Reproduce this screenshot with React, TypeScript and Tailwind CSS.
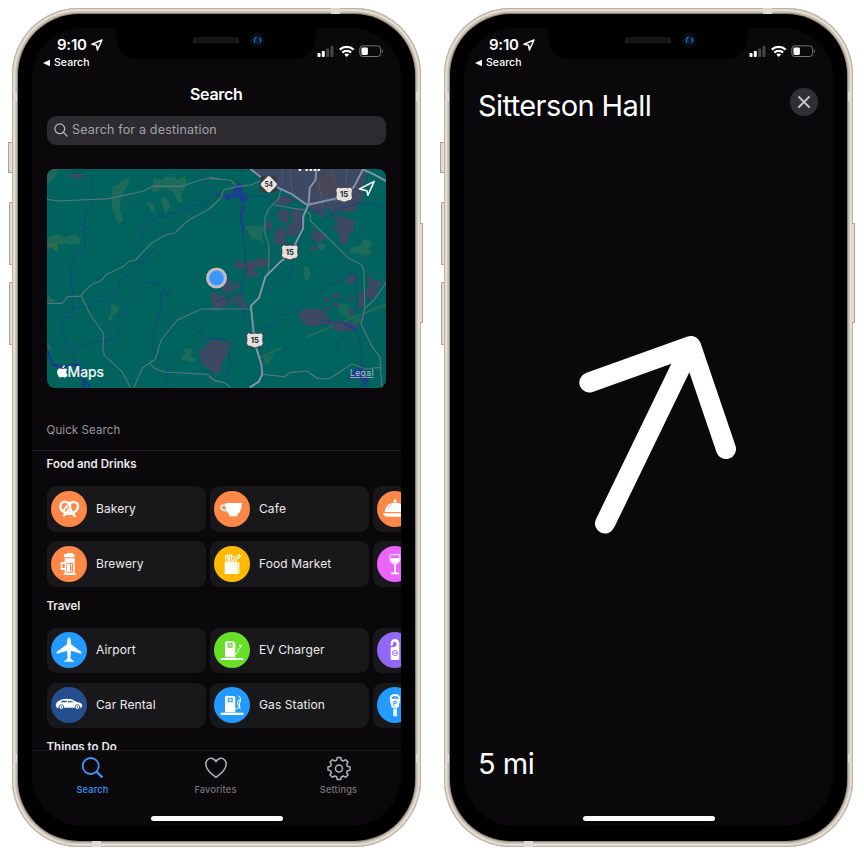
import React from "react";

const FONT = "font-['Inter','Liberation_Sans',sans-serif]";

function Hardware() {
  return (
    <>
      <div className="absolute -left-[4px] top-[134px] h-[31px] w-[4px] rounded-l-[1px] border border-r-0 border-[#a9a295] bg-[#e2ddd3]" />
      <div className="absolute -left-[3px] top-[194px] h-[63px] w-[3px] rounded-l-[1px] border border-r-0 border-[#a9a295] bg-[#e2ddd3]" />
      <div className="absolute -left-[3px] top-[274px] h-[63px] w-[3px] rounded-l-[1px] border border-r-0 border-[#a9a295] bg-[#e2ddd3]" />
      <div className="absolute -right-[2px] top-[215px] h-[100px] w-[3px] rounded-r-[1px] border border-l-0 border-[#a9a295] bg-[#e2ddd3]" />
    </>
  );
}

function Bands() {
  return (
    <>
      <div className="absolute left-[319px] top-0 h-[6px] w-[9px] bg-[#dfdad2]" />
      <div className="absolute left-[80px] bottom-0 h-[6px] w-[9px] bg-[#dfdad2]" />
      <div className="absolute left-[2px] top-[84px] h-[9px] w-[3px] bg-[#dfdad2]" />
      <div className="absolute right-[2px] top-[84px] h-[9px] w-[3px] bg-[#dfdad2]" />
      <div className="absolute left-[2px] top-[746px] h-[9px] w-[3px] bg-[#dfdad2]" />
      <div className="absolute right-[2px] top-[746px] h-[9px] w-[3px] bg-[#dfdad2]" />
    </>
  );
}

function Notch() {
  return (
    <svg className="absolute left-[80px] top-0" width="208" height="32" viewBox="0 0 208 32">
      <path d="M0 -1H208V0C205 0 204 1.500 204 5C204 21 196 31 181 31H27C12 31 4 21 4 5C4 1.500 3 0 0 0Z" fill="#000" />
      <rect x="81" y="9" width="46" height="6.500" rx="3.250" fill="#151515" />
      <path d="M83 9.500a3 3 0 0 0 0 5.500M125 9.500a3 3 0 0 1 0 5.500" stroke="#333" strokeWidth=".7" fill="none" />
      <circle cx="145.500" cy="12.300" r="7.600" fill="#080d15" />
      <circle cx="145.500" cy="12.300" r="4.300" fill="#0b1c38" />
      <path d="M144.500 9.200a3.500 3.500 0 0 0-1.500 5.500M147.500 9.800a3.500 3.500 0 0 1 .5 4.500" stroke="#2c69a8" strokeWidth="1.300" fill="none" />
    </svg>
  );
}

function StatusBar() {
  return (
    <div className="flex h-[44px] shrink-0 justify-between pl-[11px] pr-[16.500px] text-white">
      <div className="flex flex-col">
        <div className="flex items-center gap-[4px] pl-[14px] pt-[8px]">
          <span className="text-[15px] font-semibold leading-[18px] tracking-[-0.25px]">9:10</span>
          <svg width="12" height="12" viewBox="0 0 12 12">
            <path d="M11 1L1 5.300L5.600 6.300L6.400 11Z" fill="none" stroke="#fff" strokeWidth="1.500" strokeLinejoin="round" />
          </svg>
        </div>
        <div className="flex items-center gap-[4px] pt-[2px]">
          <svg width="7" height="8" viewBox="0 0 7 8"><path d="M7 .8V7.200L0 4Z" fill="#fff" /></svg>
          <span className="text-[10.500px] font-medium leading-[14px] tracking-[0.06px]">Search</span>
        </div>
      </div>
      <svg className="mt-[17px]" width="67" height="13" viewBox="0 0 67 13">
        <rect x="0.500" y="8" width="3" height="4" rx=".8" fill="#fff" />
        <rect x="4.800" y="6" width="3" height="6" rx=".8" fill="#fff" />
        <rect x="9.200" y="3.500" width="3" height="8.500" rx=".8" fill="#454547" />
        <rect x="13.500" y="1" width="3" height="11" rx=".8" fill="#454547" />
        <g fill="none" stroke="#fff" strokeWidth="2.300">
          <path d="M22.800 4.700a10 10 0 0 1 13.800 0" />
          <path d="M25.300 7.600a6.300 6.300 0 0 1 8.800 0" />
        </g>
        <path d="M27.300 9.600a3.600 3.600 0 0 1 4.800 0L29.700 12.100Z" fill="#fff" />
        <rect x="42.800" y=".9" width="20.800" height="10.600" rx="3" fill="none" stroke="#77777a" strokeWidth="1" />
        <rect x="44.400" y="2.500" width="6.500" height="7.500" rx="1.400" fill="#fff" />
        <path d="M65 4.300v3.900c1.200-.5 1.500-3.300 0-3.900Z" fill="#77777a" />
      </svg>
    </div>
  );
}

function Phone({ children }: { children: React.ReactNode }) {
  return (
    <div className="relative h-[839px] w-[409px] shrink-0 rounded-[67px] bg-[#c2b9ac] p-[6px] shadow-[inset_0_0_0_1px_#bab2a6,inset_0_0_0_2px_#ded8ce,inset_0_0_0_3px_#e9e4dc,inset_0_0_0_4px_#cdc5b9,inset_0_0_0_5px_#c2b9ac]">
      <Hardware />
      <Bands />
      <div className="h-[827px] w-[397px] rounded-[61px] bg-black p-[14px] shadow-[0_0_0_1px_#8c8479]">
        <div className="relative flex h-[798px] w-[368.5px] flex-col overflow-hidden rounded-[50px] bg-[#0a080b]">
          <StatusBar />
          {children}
          <Notch />
          <div className="absolute bottom-[5px] left-[118.500px] h-[5px] w-[132px] rounded-full bg-white" />
        </div>
      </div>
    </div>
  );
}

function Shield({ x, y }: { x: number; y: number }) {
  return (
    <g transform={`translate(${x} ${y})`}>
      <path d="M-20 -22Q-11 -18 0 -21Q11 -18 20 -22L25 -14Q22 0 25 11Q23 20 11 20L0 24L-11 20Q-23 20 -25 11Q-22 0 -25 -14Z" fill="#e2e1df" stroke="#4b3f41" strokeWidth="3" />
      <text x="0" y="8.500" textAnchor="middle" fontSize="23" fontWeight="700" fill="#252525">15</text>
    </g>
  );
}

function MapView() {
  return (
    <div className="ml-[14.500px] mt-[24.500px] h-[218.500px] w-[339.500px] shrink-0 overflow-hidden rounded-[8px] bg-[#00635d]">
      <svg width="340" height="219" viewBox="0 0 340 219">
        <g transform="translate(-6.500 -4) scale(.33333)">
          <g fill="#1c6b5b">
            <path d="M18 12H52L45 35L28 52H18Z" />
            <path d="M216 62L232 60L240 48L260 40L269 33L262 60L250 75L242 95L238 135L248 165L238 177L225 165L222 145L214 130Z" />
            <path d="M340 40L365 45L378 33L398 38L400 28L410 45L435 32L440 60L420 90L430 115L412 110L400 85L378 70L370 75L360 70L350 82L333 78Z" />
            <path d="M318 110L340 120L346 144L330 135ZM363 95L380 100L390 125L376 145L362 110Z" />
            <path d="M20 218L50 208L75 216L105 208L118 220L117 238L90 240L70 235L55 238L45 230H20Z" />
            <path d="M213 415L236 425L230 445L218 448L215 465L200 468L210 445Z" />
            <path d="M430 550L455 552L452 575L468 585L455 592L423 585L422 572L435 568Z" />
            <path d="M20 385L30 400L45 405L40 412H20ZM18 530L34 550L25 560Z" />
          </g>
          <path d="M20 232H52L50 260L38 250L20 245Z" fill="#37684d" />
          <path d="M89 28L132 28L127 37L90 40Z" fill="#414864" />
          <path d="M474 560L490 550V535L505 540L515 528L530 533L542 526V620L525 628L515 620L500 610L485 600L480 580ZM505 635L518 642L508 650ZM528 405L542 380V428H525Z" fill="#3d4962" />
          <g fill="none" stroke="#1c3e87" strokeWidth="2.500">
            <path d="M156 40L154 60L160 90L150 125L134 150L132 165L135 175L120 181L138 188L129 192L134 212V258L110 260L92 300L95 330L90 350L98 375L95 410L99 440L93 455L70 460L67 495L75 515L72 530L98 550L102 590" />
            <path d="M473 14L490 25L495 45L510 70L525 85L535 90L540 75M540 92L510 90L500 100L505 110L480 122L465 118L440 133L425 128L408 145L385 145L376 157L352 152L345 168L335 165L320 180L306 190L301 205L310 222" />
            <path d="M350 245L330 262L318 280L300 292L275 320L250 340L238 345L235 370L228 385L212 385L190 410L165 407L150 427L120 425L95 434" />
            <path d="M286 385L265 405L245 450L242 490L225 515L190 528L155 533L130 545L98 543" />
            <path d="M310 356Q340 340 372 378L360 385L362 430L348 480L340 510L335 550L350 572L378 600L380 640L372 662" />
            <path d="M452 470L460 495L475 500L488 520L540 523" />
          </g>
          <path d="M20 555L35 598L70 608L98 598L120 608L125 640L148 665M98 598L112 600L130 645V668" stroke="#183c8a" strokeWidth="7" fill="none" />
          <path d="M371 387L391 386L385 392H373Z" fill="#1b3e87" />
          <g fill="none" stroke="#567679" strokeWidth="3.500" strokeLinejoin="round">
            <path d="M18 103L55 108L205 101L310 78L335 64H422L470 48L510 38L545 43" />
            <path d="M18 415H65L82 394H121L130 380L155 358L180 348L200 327L246 306L265 290L285 285L332 235L375 210L402 204L445 165L510 130L542 98" />
            <path d="M121 390L150 450L190 507L187 550L192 572L245 620L270 668" />
            <path d="M280 668L306 608L345 582L362 525L410 465L484 432H545" />
            <path d="M328 595L342 610L372 621L500 628L520 645L545 652" />
          </g>
        </g>
        <g transform="translate(163.500 -4) scale(.33333)">
          <g fill="#1c6b5b">
            <path d="M104 185L125 180L150 185L165 182L155 210L160 240L145 225L125 222L115 205Z" />
            <path d="M420 250L450 240L460 222L480 225L485 240L475 250L485 262L465 275L440 265L418 266ZM322 232L345 240L340 258L323 255ZM280 305L293 303L300 325L293 347L280 340ZM160 575L190 570L175 598L160 595Z" />
            <path d="M385 415H408L430 445V460L450 458L460 468L428 480L425 465L400 452L386 440Z" fill="#176a56" />
          </g>
          <path d="M290 515L530 416M148 578L213 549" stroke="#206a58" strokeWidth="8" />
          <g fill="#3d4962">
            <path d="M120 12H458L470 30L458 60V110H440V135L410 142L390 135L375 150L345 125L315 148L295 124L265 110L245 90L205 68L165 50Z" />
            <path d="M197 95L230 90L250 108L232 118L200 120ZM199 137L220 132L240 142L228 182L203 158ZM166 167L190 175L178 196L164 190ZM194 194L226 186V235L190 238ZM232 180L265 160L278 180L255 215L230 210ZM305 193L330 202L352 213L325 235L303 220ZM300 245L323 240L316 258L295 255ZM365 158L395 152L420 165L432 158L430 202L408 210L415 220L405 240L385 235L390 218L378 198L384 175ZM324 122L345 135L350 158L328 155ZM240 140L275 128L272 168L250 172ZM370 178L382 185L365 205Z" />
            <path d="M72 290L95 285L98 300L115 285L130 292L135 280L172 281L173 303L130 310L145 333L110 338L108 312H80L73 305ZM47 337L62 345L65 380L45 388ZM70 355L90 357L85 373L68 370ZM0 385L15 375L20 395L42 388L52 425L8 428ZM75 390L98 387L95 405L115 425L90 427L78 420ZM66 390L72 408L60 425L55 408Z" />
            <path d="M264 443L290 430L325 432L350 442L355 468H380L445 475L436 495L395 500L365 490L370 480L325 478L310 487L280 475L268 460ZM401 350L425 327L440 335L435 352L408 356ZM443 382L460 380V430L443 425ZM467 330L478 335L487 345L510 350L523 348L500 370L503 390L470 408L465 380L475 360ZM365 387L390 384V400L368 398ZM342 398L363 402L355 410L340 408ZM365 412L395 418L375 430ZM332 421L362 428L350 435ZM415 400L433 393L423 410ZM411 435L425 432L433 448L420 455Z" />
            <path d="M0 520L30 530L60 530V545L50 550L52 570L40 580L35 600L20 605L18 622L0 615Z" />
          </g>
          <path d="M310 70L325 35L350 25L378 28L380 60L350 95L325 90Z" fill="#4b4757" />
          <g fill="none" stroke="#1c3e87" strokeWidth="2.500">
            <path d="M95 205L105 245L103 285L110 310L95 350L93 385L60 390L15 410M95 435L105 465L120 488L155 492L185 478L210 452L240 445L270 430L310 390L345 360L395 345L412 328L430 320L437 345L435 375L442 385V420L435 430L465 455L480 480L510 510L528 520M170 380L190 370L210 352L235 335L245 310L240 295M110 85L130 95L160 93L190 110L205 90L240 98L290 128L330 145L360 158L380 130L420 125L450 110L460 120L490 115L510 128L530 123M330 468L395 473L435 490L445 515L455 565L450 600L458 635" />
            <path d="M0 520L40 523L68 540L55 570L60 600L45 635M275 150L270 235L250 285" />
          </g>
          <path d="M35 85L65 88L72 70L85 52L98 60L95 80L112 95L104 112L93 110L105 130L95 150L100 185L97 214L90 170L88 140L95 125L85 95L62 100L50 108ZM400 472L440 490L435 498L412 485ZM370 300L382 308L378 316ZM372 527L387 536L378 542ZM470 400L478 398L475 412ZM91 432L106 433L98 442ZM430 615L452 608L460 592L460 625L475 640L465 668L450 640L420 640L405 648Z" fill="#1c3e8d" />
          <path d="M215 12V60M238 12L245 85M325 55L338 130M360 12L375 50M410 12L405 60L450 100M340 100L400 112M378 60L390 90" stroke="#4f6276" strokeWidth="2" fill="none" />
          <g fill="none" stroke="#567679" strokeWidth="3.500" strokeLinejoin="round">
            <path d="M-2 130L30 100L40 75L80 65L120 60L165 42M-2 41L60 45L75 60" />
            <path d="M212 70L205 100L175 130L163 160V205L175 240V318L168 332" />
            <path d="M192 120L250 130L285 135L300 150V168L415 280L455 300L460 320L463 430L490 405L528 352M463 430L452 478L485 545L508 575L514 668M-2 432H122M158 628L220 635L240 622L290 618L320 640L355 642L425 597L465 612L510 607M-2 635L15 648L45 654L60 668" />
          </g>
          <g fill="none" stroke="#8391a8" strokeWidth="6" strokeLinejoin="round">
            <path d="M120 12L170 52L245 88L290 120L370 102L405 90L430 66L457 14" />
            <path d="M455 12L490 28L530 50" />
            <path d="M318 12L315 45L298 68L294 118L278 155V190L255 235L235 270L210 290L165 335L145 400L121 422L124 450L128 490L136 545L153 600L155 628L145 650L117 668" />
          </g>
          <rect x="149" y="33" width="51" height="50" rx="8" fill="#3c3a43" />
          <path d="M175 33Q178 33 180 36L198 54Q201 58 198 62L180 80Q175 85 170 80L152 62Q149 58 152 54L170 36Q172 33 175 33Z" fill="#e5e4e2" />
          <text x="175" y="66" textAnchor="middle" fontSize="21" fontWeight="700" fill="#252525" textLength="24" lengthAdjust="spacingAndGlyphs">54</text>
          <Shield x={401} y={88} />
          <Shield x={238} y={261} />
          <Shield x={133} y={525} />
          <text x="262" y="19" fontSize="44" fontWeight="700" fill="#fff">Hill</text>
          <path d="M491 49L447 72L469 77L472 91Z" fill="none" stroke="#fff" strokeWidth="4.500" strokeLinejoin="round" />
        </g>
        <path d="M174 115l8-3 5 10h-12z" fill="#3d4962" />
        <circle cx="169.500" cy="109" r="11.200" fill="#064842" opacity=".5" />
        <circle cx="169.500" cy="109" r="10.500" fill="#bebdc0" />
        <circle cx="169.500" cy="109" r="7.400" fill="#3b97ff" />
        <g transform="translate(9.700 196.300) scale(.46)">
          <path d="M18 7.200C20.500 7.200 22 8.500 23 10C19.500 12.500 20 18 24 20C22.500 24 20 26.500 18 26.500C16 26.500 15.500 25.300 13 25.300C10.500 25.300 9.500 26.500 8 26.500C5 26.500 1 20 1 14.500C1 9.500 4 7 7.500 7C10 7 11.500 8.300 13 8.300C14.500 8.300 16 7.200 18 7.200ZM17.500 0C18 3.500 15 6.700 12 6.500C11.700 3.500 14.500 .4 17.500 0Z" fill="#fff" />
        </g>
        <text x="20.500" y="208.300" fontSize="14.500" fill="#fff" stroke="#fff" strokeWidth=".2" textLength="36.500" lengthAdjust="spacingAndGlyphs">Maps</text>
        <text x="303" y="207" fontSize="8.500" fill="#adc1c1" textDecoration="underline" textLength="23.500">Legal</text>
      </svg>
    </div>
  );
}

const glyphs: Record<string, React.ReactNode> = {
  pretzel: (
    <g fill="none" stroke="#fff" strokeLinecap="round">
      <path d="M39 73C47 66 60 54 57 42C53 31 34 29 29 41C25 54 36 66 50 68C64 70 79 62 81 47C82 35 68 30 60 35C53 40 57 52 61 60C63 66 68 71 71 75" strokeWidth="7" />
      <path d="M37 60L49 44" strokeWidth="6" />
      <path d="M44 67H64" strokeWidth="9" />
    </g>
  ),
  beer: (
    <g fill="#fff">
      <path d="M40 34L38 27Q42 22 47 24Q51 18 57 22Q65 18 67 25Q73 26 70 34Z" />
      <path d="M41 37H71V82H74V87H38V82H41ZM46 50V80H66V50Z" fillRule="evenodd" />
      <path d="M48 53H57V78H48Z" />
      <path d="M60 54h3v10h-3zM60 68h3v3h-3zM59 73h4v4h-4z" />
      <path d="M42 48H29V72H42V67H34V53H42Z" />
    </g>
  ),
  cup: (
    <g>
      <path d="M34 36H83C84 54 77 66 70 70V76H46V70C38 65 33 54 34 36Z" fill="#fff" />
      <path d="M36 43H27C16 43 20 62 39 58" fill="none" stroke="#fff" strokeWidth="4.500" />
    </g>
  ),
  bag: (
    <g>
      <path d="M32 49H76V81L70 84H32Z" fill="#fff" />
      <path d="M37 49L34 31L40 27L45 49M47 49L46 27H52L54 49M56 49L63 35L76 26L80 31L67 40L65 49M60 35L56 29" fill="none" stroke="#fff" strokeWidth="3.500" />
      <path d="M70 53V80" stroke="#ffc83a" strokeWidth="2" />
    </g>
  ),
  cloche: (
    <g fill="#fff">
      <circle cx="54" cy="29" r="4.500" />
      <path d="M23 63C25 43 38 35 54 35S83 43 85 63Z" />
      <path d="M18 67H90Q86 77 77 77H31Q22 77 18 67Z" />
      <path d="M33 53Q37 44 44 41" stroke="#ff8748" strokeWidth="2.500" fill="none" />
    </g>
  ),
  wine: (
    <g>
      <path d="M40 26H68C71 44 66 54 54 55C42 54 37 44 40 26Z" fill="none" stroke="#fff" strokeWidth="3" />
      <path d="M41 36H67C67 47 63 52 54 53C45 52 41 47 41 36Z" fill="#fff" />
      <path d="M54 54V81M42 82H66" stroke="#fff" strokeWidth="5" />
    </g>
  ),
  plane: (
    <path d="M54 16C58 17 60 25 60 37L91 60V65L60 56L58 79L68 88V91L56 88L54 92L52 88L40 91V88L50 79L48 56L17 65V60L48 37C48 25 50 17 54 16Z" fill="#fff" />
  ),
  car: (
    <g>
      <path d="M14 54L18 45L30 38Q46 33 62 37L77 45Q92 47 94 54L91 62H17Z" fill="#fff" />
      <path d="M28 46L34 41H47V46ZM51 41Q62 41 70 46H51Z" fill="#254e8e" />
      <circle cx="31" cy="60" r="7" fill="#fff" stroke="#254e8e" strokeWidth="2.500" />
      <circle cx="79" cy="60" r="7" fill="#fff" stroke="#254e8e" strokeWidth="2.500" />
      <circle cx="31" cy="60" r="2" fill="#254e8e" /><circle cx="79" cy="60" r="2" fill="#254e8e" />
    </g>
  ),
  ev: (
    <g>
      <path d="M33 33Q33 28 38 27L62 29Q64 30 64 34V76H33ZM20 78H88V84H20Z" fill="#fff" />
      <path d="M41 33H56V47H41Z" fill="#69df29" />
      <path d="M49 34L44 41H49L47 46L54 39H49Z" fill="#fff" />
      <path d="M64 64H70Q73 64 72 57T76 50Q79 50 80 43M76 43H84M77 38V43M82 38V43" fill="none" stroke="#fff" strokeWidth="2.500" />
    </g>
  ),
  gas: (
    <g>
      <path d="M33 31Q33 27 38 26L62 28Q64 29 64 33V76H33ZM20 77H88V84H20Z" fill="#fff" />
      <path d="M41 32H56V46H41Z" fill="#229aff" />
      <path d="M48.500 34V44M43 39H54" stroke="#fff" strokeWidth="3" />
      <path d="M64 66Q74 67 74 58L71 48L73 38L79 42L76 51L78 67M73 26L79 33V42" fill="none" stroke="#fff" strokeWidth="3" />
    </g>
  ),
  hanger: (
    <g>
      <path d="M41 33Q43 21 54 21T67 33V80Q67 84 63 84H45Q41 84 41 80ZM54 29A7 7 0 0 0 48 39L41 42V46L54 44A8 8 0 0 0 54 29Z" fillRule="evenodd" fill="#fff" />
      <circle cx="54" cy="63" r="8" fill="none" stroke="#9168f9" strokeWidth="2.500" /><path d="M48 63H60" stroke="#9168f9" strokeWidth="3" />
    </g>
  ),
  meter: (
    <g>
      <path d="M38 36C38 26 44 21 54 21S70 26 70 36L65 59Q64 62 60 62V88H49V62Q44 62 43 59Z" fill="#fff" />
      <path d="M43 35Q45 27 54 27T65 35Z" fill="#229aff" />
      <path d="M54 35L57 28" stroke="#fff" strokeWidth="1.500" />
      <text x="54" y="56" fontSize="20" fontWeight="600" textAnchor="middle" fill="#229aff">P</text>
      <path d="M48 64H60" stroke="#229aff" strokeWidth="2" />
    </g>
  ),
};

function Card({ icon, bg, label = "" }: { icon: string; bg: string; label?: string }) {
  return (
    <div className="flex h-full w-[159.500px] shrink-0 items-center rounded-[9px] bg-[#18181a] pl-[4.500px]">
      <div className={`h-[36px] w-[36px] shrink-0 overflow-hidden rounded-full ${bg}`}>
        <svg width="36" height="36" viewBox="0 0 108 108">{glyphs[icon]}</svg>
      </div>
      <span className="pl-[9px] text-[12px] leading-[16px] tracking-[0.1px] text-[#ececee]">{label}</span>
    </div>
  );
}

function Row({ children, className = "" }: { children: React.ReactNode; className?: string }) {
  return <div className={`flex shrink-0 gap-[3.500px] pl-[14.500px] ${className}`}>{children}</div>;
}

function SearchScreen() {
  return (
    <>
      <div className="flex min-h-0 flex-1 flex-col overflow-hidden">
        <h1 className="mt-[12px] shrink-0 text-center text-[16px] font-semibold leading-[20px] tracking-[-0.3px] text-white">Search</h1>
        <div className="ml-[14.500px] mt-[11.500px] flex h-[29px] w-[339.500px] shrink-0 items-center rounded-[9px] bg-[#2d2b30] pl-[7px]">
          <svg width="14" height="14" viewBox="0 0 14 14" fill="none" stroke="#b4b3b9" strokeWidth="1.250" strokeLinecap="round"><circle cx="5.800" cy="5.800" r="4.900" /><path d="M9.400 9.400L13 13" /></svg>
          <span className="pl-[4.500px] text-[12.500px] leading-[18px] tracking-[0.18px] text-[#a3a2a8]">Search for a destination</span>
        </div>
        <MapView />
        <div className="ml-[14.500px] mt-[34px] shrink-0 text-[11.500px] leading-[16px] tracking-[0.1px] text-[#98979c]">Quick Search</div>
        <div className="mt-[12.500px] h-px shrink-0 bg-[#202023]" />
        <h2 className="ml-[14.500px] mt-[5px] shrink-0 text-[11.500px] font-semibold leading-[16px] text-[#e9e9eb]">Food and Drinks</h2>
        <Row className="mt-[14px] h-[46px]">
          <Card icon="pretzel" bg="bg-[#ff8748]" label="Bakery" />
          <Card icon="cup" bg="bg-[#ff8748]" label="Cafe" />
          <Card icon="cloche" bg="bg-[#ff8748]" />
        </Row>
        <Row className="mt-[9px] h-[46px]">
          <Card icon="beer" bg="bg-[#ff8748]" label="Brewery" />
          <Card icon="bag" bg="bg-[#ffb900]" label="Food Market" />
          <Card icon="wine" bg="bg-[#ec64ff]" />
        </Row>
        <h2 className="ml-[14.500px] mt-[11px] shrink-0 text-[11.500px] font-semibold leading-[16px] tracking-[-0.1px] text-[#e9e9eb]">Travel</h2>
        <Row className="mt-[13.500px] h-[45.500px]">
          <Card icon="plane" bg="bg-[#229aff]" label="Airport" />
          <Card icon="ev" bg="bg-[#69df29]" label="EV Charger" />
          <Card icon="hanger" bg="bg-[#9168f9]" />
        </Row>
        <Row className="mt-[9.500px] h-[45.500px]">
          <Card icon="car" bg="bg-[#254e8e]" label="Car Rental" />
          <Card icon="gas" bg="bg-[#229aff]" label="Gas Station" />
          <Card icon="meter" bg="bg-[#229aff]" />
        </Row>
        <h2 className="ml-[14.500px] mt-[11px] shrink-0 text-[11.500px] font-semibold leading-[16px] text-[#e9e9eb]">Things to Do</h2>
      </div>
      <nav className="flex h-[76px] shrink-0 justify-between border-t border-[#1b1b1e] pr-[1.500px] pt-[6px] text-[9.200px] font-medium leading-[12px] tracking-[0.2px]">
        <div className="flex w-[121px] flex-col items-center gap-[5px] text-[#3b97f8]">
          <svg width="23" height="22" viewBox="0 0 23 22" fill="none" stroke="#3b97f8" strokeWidth="1.800"><circle cx="9.700" cy="9" r="8" /><path d="M15.200 14.500L21.500 20.500" strokeWidth="2.400" /></svg>
          <span>Search</span>
        </div>
        <div className="flex w-[121px] flex-col items-center gap-[5px] text-[#77767b]">
          <svg width="22" height="22" viewBox="0 0 22 22" fill="none" stroke="#b2b1b5" strokeWidth="1.500" strokeLinejoin="round"><path d="M11 4.600C9.500 1.900 7.500 1.300 6 1.300C3.200 1.300.8 3.700.8 7C.8 12.500 5.800 16.700 11 20.400C16.200 16.700 21.200 12.500 21.200 7C21.200 3.700 18.800 1.300 16 1.300C14.500 1.300 12.500 1.900 11 4.600Z" /></svg>
          <span>Favorites</span>
        </div>
        <div className="flex w-[121px] flex-col items-center gap-[5px] text-[#77767b]">
          <svg className="overflow-visible" width="24" height="22" viewBox="0 0 24 22" fill="none" stroke="#b2b1b5" strokeWidth="1.500" strokeLinejoin="round">
            <path d="M10.300 .5H13.700L14.400 3.300Q15.400 3.500 16.200 4.100L18.700 2.700L21 5L19.600 7.400Q20.200 8.300 20.400 9.300L23 10V13.100L20.400 13.800Q20.200 14.800 19.600 15.700L21 18L18.700 20.300L16.200 19Q15.400 19.500 14.400 19.800L13.700 22.500H10.300L9.600 19.800Q8.600 19.500 7.800 19L5.300 20.300L3 18L4.400 15.700Q3.800 14.800 3.600 13.800L1 13.100V10L3.600 9.300Q3.800 8.300 4.400 7.400L3 5L5.300 2.700L7.800 4.100Q8.600 3.500 9.600 3.300Z" />
            <circle cx="12" cy="11.500" r="3.500" />
          </svg>
          <span>Settings</span>
        </div>
      </nav>
    </>
  );
}

function DirectionScreen() {
  return (
    <div className="flex flex-1 flex-col pl-[14px] pr-[15px] text-white">
      <div className="mt-[15px] flex h-[38px] items-start justify-between">
        <h1 className="text-[29px] leading-[38px] tracking-[-0.58px]">Sitterson Hall</h1>
        <button aria-label="Close" className="mt-[1px] flex h-[28px] w-[28px] items-center justify-center rounded-full bg-[#302f33]">
          <svg width="12" height="12" viewBox="0 0 12 12" stroke="#c7c6cb" strokeWidth="1.800" strokeLinecap="round"><path d="M1 1L11 11M11 1L1 11" /></svg>
        </button>
      </div>
      <svg className="ml-[100px] mt-[210px]" width="160" height="200" viewBox="0 0 160 200" fill="none" stroke="#fff" strokeWidth="20" strokeLinecap="round" strokeLinejoin="round">
        <path d="M11.300 47.500L113 11L148 114M113 11L27 188.500" />
      </svg>
      <div className="mt-[210px] text-[29px] leading-[38px] tracking-[-0.5px]">5 mi</div>
    </div>
  );
}

export default function App() {
  return (
    <main className={`flex h-[855px] w-[864px] gap-[23px] overflow-hidden bg-white pl-[12px] pt-[8px] ${FONT}`}>
      <Phone><SearchScreen /></Phone>
      <Phone><DirectionScreen /></Phone>
    </main>
  );
}
